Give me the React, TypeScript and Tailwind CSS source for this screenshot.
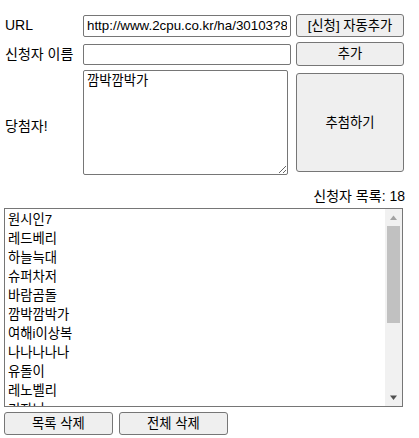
import React from "react";

// only the rows that fit in the visible part of the list box
const applicants = [
  "원시인7",
  "레드베리",
  "하늘늑대",
  "슈퍼차저",
  "바람곰돌",
  "깜박깜박가",
  "여해i이상복",
  "나나나나나",
  "유돌이",
  "레노벨리",
  "기자니",
];

const btn =
  "bg-[#efefef] border border-[#767676] rounded-[3px] text-black text-[13.33px] leading-none";

const App = () => {
  return (
    <div className="w-[419px] h-[438px] bg-white text-black font-['Liberation_Sans','Noto_Sans_CJK_KR',sans-serif] pt-[14px] pl-[4px] overflow-hidden">
      <div className="flex items-center h-[23px]">
        <span className="w-[79px] pl-[1px] text-[14px]">URL</span>
        <input
          readOnly
          value="http://www.2cpu.co.kr/ha/30103?8"
          className="w-[208px] h-[22px] border border-[#767676] rounded-[2px] px-[3px] text-[13.33px] outline-none overflow-hidden"
        />
        <button className={`${btn} ml-[5px] w-[108px] h-[23px]`}>
          [신청] 자동추가
        </button>
      </div>
      <div className="flex items-center h-[24px] mt-[5px]">
        <span className="w-[79px] pl-[1px] text-[14px]">신청자 이름</span>
        <input className="w-[208px] h-[21px] border border-[#767676] rounded-[2px] px-[3px] text-[13.33px] outline-none" />
        <button className={`${btn} ml-[5px] w-[108px] h-[24px]`}>추가</button>
      </div>
      <div className="flex items-center mt-[4px] h-[105px]">
        <span className="w-[79px] pl-[1px] pt-[8px] text-[14px]">당첨자!</span>
        <textarea
          readOnly
          value="깜박깜박가"
          className="w-[205px] h-[105px] border border-[#767676] rounded-[2px] px-[3px] py-[1px] text-[13.33px] leading-[17px] outline-none"
        />
        <button className={`${btn} ml-[8px] w-[108px] h-[99px]`}>추첨하기</button>
      </div>
      <div className="flex justify-end pr-[14px] mt-[11px] h-[20px] items-center text-[14px]">
        신청자 목록: 18
      </div>
      <div className="flex w-[399px] h-[199px] mt-[2px] border border-[#767676]">
        <ul className="flex-1 overflow-hidden pl-[3px] pt-[1px] text-[13.33px] leading-[19px]">
          {applicants.map((a) => (
            <li key={a}>{a}</li>
          ))}
        </ul>
        <div className="w-[17px] bg-[#f1f1f1] flex flex-col items-center">
          <svg width="17" height="17" viewBox="0 0 17 17">
            <path d="M5 11 L8.5 6.5 L12 11 Z" fill="#a3a3a3" />
          </svg>
          <div className="w-[13px] h-[97px] bg-[#c1c1c1]" />
          <div className="flex-1" />
          <svg width="17" height="17" viewBox="0 0 17 17">
            <path d="M5 6.5 L8.5 11 L12 6.5 Z" fill="#505050" />
          </svg>
        </div>
      </div>
      <div className="flex gap-[6px] mt-[5px]">
        <button className={`${btn} w-[109px] h-[23px]`}>목록 삭제</button>
        <button className={`${btn} w-[109px] h-[23px]`}>전체 삭제</button>
      </div>
    </div>
  );
};

export default App;
